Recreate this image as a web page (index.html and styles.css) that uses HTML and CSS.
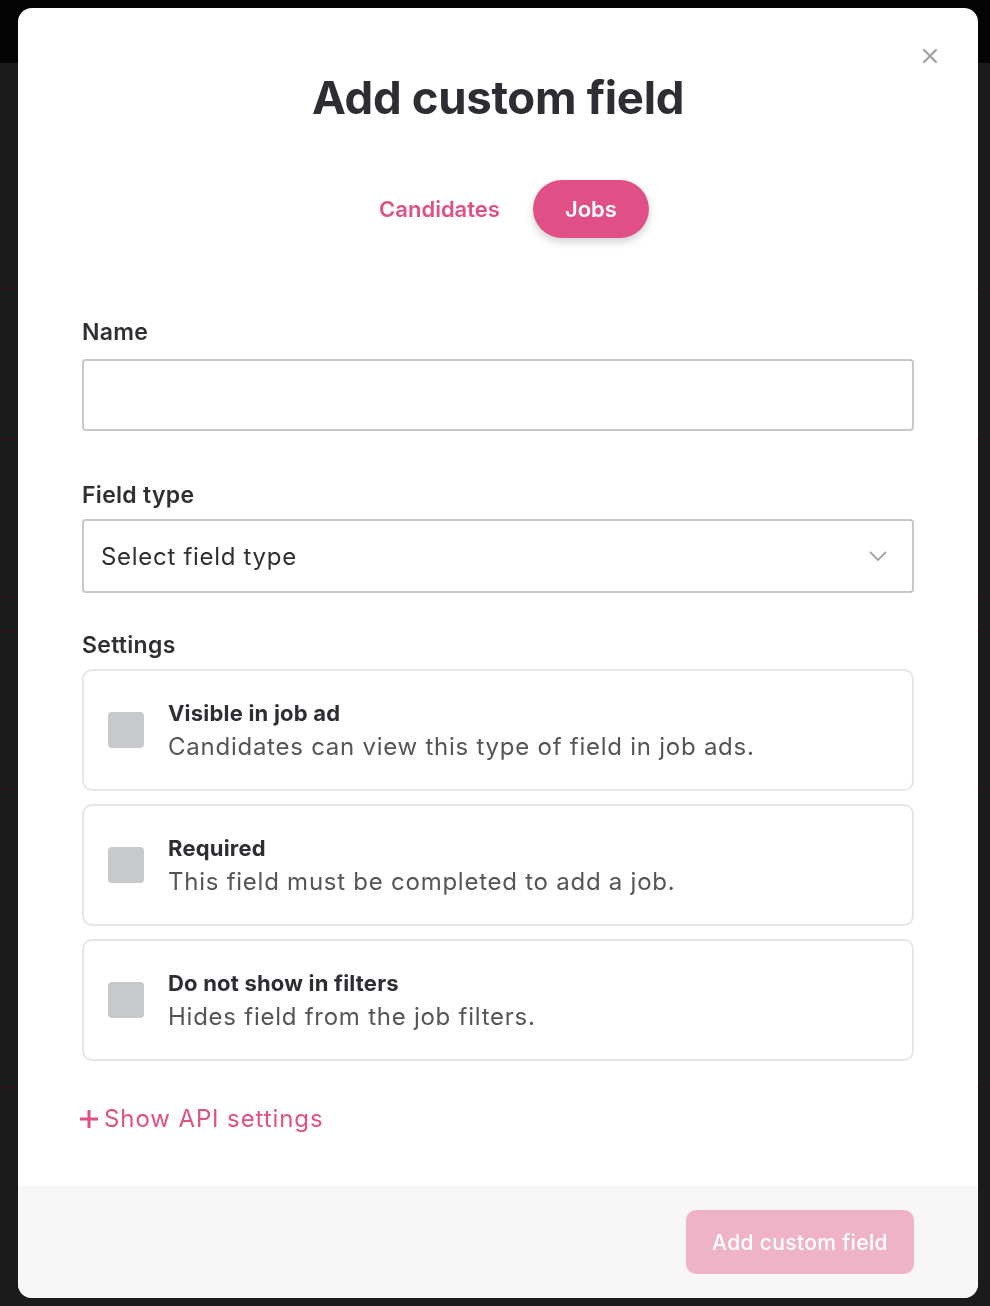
FILE: index.html
```html
<!DOCTYPE html>
<html lang="en">
<head>
    <meta charset="UTF-8">
    <title>Add custom field</title>
    <link rel="stylesheet" href="styles.css">
</head>
<body>
    <div class="page">
        <div class="topbar"></div>
        <div class="rows">
            <div class="row" style="height: 227px"></div>
            <div class="row" style="height: 150px"></div>
            <div class="row" style="height: 158px"></div>
            <div class="row" style="height: 34px"></div>
            <div class="row" style="height: 158px"></div>
            <div class="row" style="height: 298px"></div>
        </div>
    </div>

    <div class="overlay">
        <div class="modal">
            <button class="close-btn" aria-label="Close">
                <svg width="16" height="16" viewBox="0 0 16 16"><path d="M2 2 L14 14 M14 2 L2 14" stroke="#a3a3a8" stroke-width="2.4" stroke-linecap="round"/></svg>
            </button>

            <div class="modal-body">
                <h1>Add custom field</h1>

                <div class="tabs">
                    <button class="tab">Candidates</button>
                    <button class="tab active">Jobs</button>
                </div>

                <div class="field">
                    <label class="label">Name</label>
                    <input type="text" class="text-input">
                </div>

                <div class="field">
                    <label class="label tight">Field type</label>
                    <div class="select">
                        <span>Select field type</span>
                        <svg width="20" height="12" viewBox="0 0 20 12"><path d="M2 2 L10 10 L18 2" fill="none" stroke="#a3a3a8" stroke-width="1.8"/></svg>
                    </div>
                </div>

                <div class="settings">
                    <div class="label tight">Settings</div>
                    <div class="option">
                        <span class="checkbox"></span>
                        <div>
                            <div class="option-title">Visible in job ad</div>
                            <div class="option-desc">Candidates can view this type of field in job ads.</div>
                        </div>
                    </div>
                    <div class="option">
                        <span class="checkbox"></span>
                        <div>
                            <div class="option-title">Required</div>
                            <div class="option-desc">This field must be completed to add a job.</div>
                        </div>
                    </div>
                    <div class="option">
                        <span class="checkbox"></span>
                        <div>
                            <div class="option-title">Do not show in filters</div>
                            <div class="option-desc">Hides field from the job filters.</div>
                        </div>
                    </div>
                </div>

                <a class="api-link" href="#">
                    <svg width="22" height="22" viewBox="0 0 22 22"><path d="M11 2 V20 M2 11 H20" stroke="#e04f86" stroke-width="3"/></svg>
                    Show API settings
                </a>
            </div>

            <div class="modal-footer">
                <button class="submit-btn" disabled>Add custom field</button>
            </div>
        </div>
    </div>
</body>
</html>
```

FILE: styles.css
```css
* {
    margin: 0;
    padding: 0;
    box-sizing: border-box;
}

body {
    font-family: Inter, "Noto Sans", sans-serif;
    background-color: #1b1b1b;
    color: #333;
}

.page {
    height: 1306px;
    overflow: hidden;
}

.topbar {
    height: 63px;
    background-color: #040404;
}

.row {
    border-bottom: 2px solid #2a1519;
}

.overlay {
    position: fixed;
    inset: 0;
    padding: 8px 12px 8px 18px;
}

.modal {
    position: relative;
    width: 960px;
    height: 1290px;
    background-color: white;
    border-radius: 14px;
    overflow: hidden;
    display: flex;
    flex-direction: column;
}

.close-btn {
    position: absolute;
    top: 40px;
    right: 40px;
    background: none;
    border: none;
    cursor: pointer;
}

.modal-body {
    flex: 1;
    padding: 68px 64px 0;
}

h1 {
    text-align: center;
    font-size: 45.5px;
    font-weight: 700;
    color: #2d2d33;
    letter-spacing: -0.3px;
    line-height: 44px;
}

.tabs {
    display: flex;
    justify-content: center;
    gap: 33px;
    margin-top: 60px;
    margin-bottom: 80px;
    padding-left: 32px;
}

.tab {
    font-family: inherit;
    font-size: 22px;
    font-weight: 600;
    color: #e04f86;
    background: none;
    border: none;
    height: 58px;
    cursor: pointer;
}

.tab.active {
    background-color: #e04f86;
    color: white;
    border-radius: 29px;
    width: 116px;
    box-shadow: 0 4px 8px rgba(0, 0, 0, 0.18);
}

.field {
    margin-bottom: 50px;
}

.label {
    font-size: 23px;
    font-weight: 600;
    color: #2f2f34;
    letter-spacing: 0.3px;
    margin-bottom: 13px;
    display: block;
}

.label.tight {
    margin-bottom: 10px;
}

.text-input {
    width: 100%;
    height: 72px;
    border: 2px solid #c8c8cc;
    border-radius: 4px;
    font-family: inherit;
    font-size: 24px;
}

.select {
    height: 74px;
    border: 2px solid #c8c8cc;
    border-radius: 4px;
    display: flex;
    align-items: center;
    justify-content: space-between;
    padding: 0 24px 0 17px;
    font-size: 24px;
    color: #2f2f34;
    letter-spacing: 0.7px;
}

.settings {
    margin-top: -12px;
}

.option {
    height: 122px;
    border: 2px solid #e6e6e8;
    border-radius: 10px;
    display: flex;
    align-items: center;
    gap: 24px;
    padding: 0 24px;
    margin-bottom: 13px;
}

.checkbox {
    width: 36px;
    height: 36px;
    flex-shrink: 0;
    background-color: #c8c9cd;
    border-radius: 4px;
}

.option-title {
    font-size: 22px;
    font-weight: 700;
    color: #2d2d33;
    letter-spacing: 0.2px;
    margin-bottom: 6px;
}

.option-desc {
    font-size: 24px;
    color: #555559;
    letter-spacing: 0.75px;
}

.api-link {
    display: inline-flex;
    align-items: center;
    gap: 4px;
    margin-top: 30px;
    margin-left: -4px;
    font-size: 24px;
    color: #e04f86;
    text-decoration: none;
    letter-spacing: 0.9px;
}

.modal-footer {
    height: 112px;
    background-color: #f7f7f7;
    display: flex;
    justify-content: flex-end;
    align-items: center;
    padding: 0 64px;
}

.submit-btn {
    width: 228px;
    height: 64px;
    border: none;
    border-radius: 10px;
    background-color: #efb3c8;
    color: white;
    font-family: inherit;
    font-size: 21px;
    font-weight: 500;
    letter-spacing: 0.35px;
}
```
